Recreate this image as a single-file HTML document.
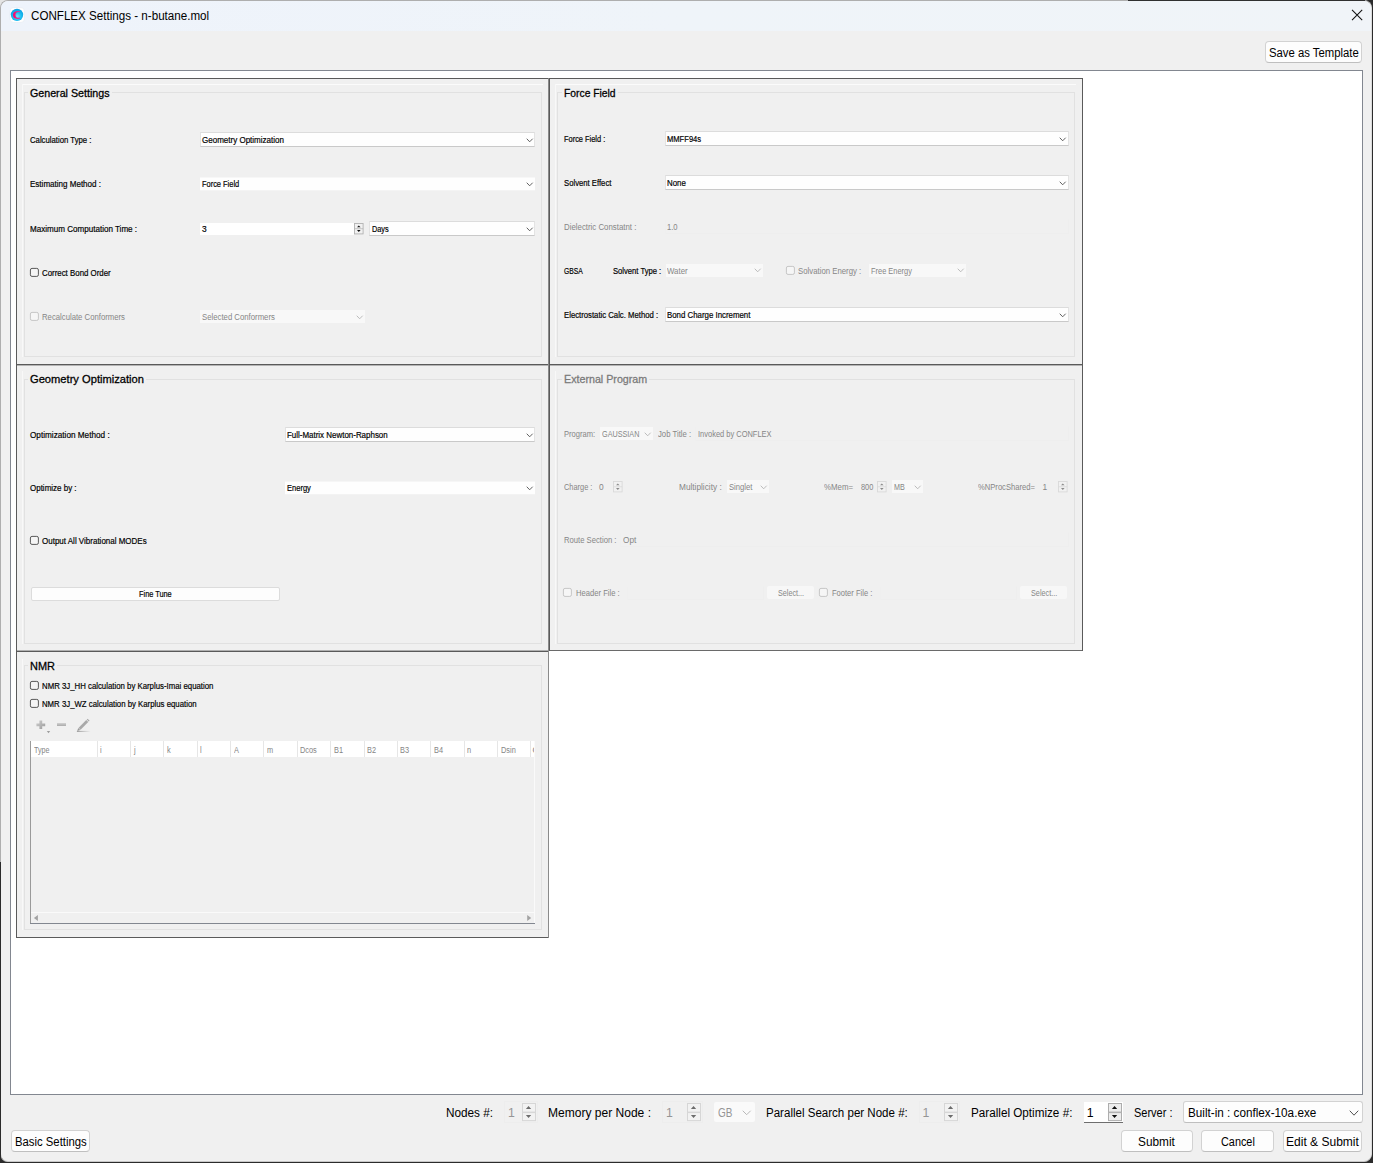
<!DOCTYPE html>
<html><head><meta charset="utf-8"><title>CONFLEX Settings - n-butane.mol</title>
<style>
html,body{margin:0;padding:0}
body{width:1373px;height:1163px;position:relative;overflow:hidden;background:#2b2b2b;font-family:"Liberation Sans",sans-serif}
.a{position:absolute;box-sizing:border-box}
.t{position:absolute;white-space:pre;line-height:16px;height:16px;transform-origin:0 0}
svg{overflow:visible}
</style></head><body>
<div class="a" style="left:0px;top:0px;width:12px;height:12px;background:#e4e4e4;"></div>
<div class="a" style="left:0px;top:0px;width:1372px;height:1162px;background:#f0f0f0;border:1px solid #aeaeae;border-radius:8px;border-right-color:#dcdcdc;border-bottom-color:#c8c8c8;"></div>
<div class="a" style="left:1128px;top:0px;width:237px;height:1px;background:#303030;"></div>
<div class="a" style="left:0px;top:862px;width:1px;height:300px;background:#2b2b2b;"></div>
<div class="a" style="left:1px;top:1px;width:1370px;height:30px;background:linear-gradient(90deg,#eef3fb 0%,#eff4f9 50%,#f0f4f8 100%);border-radius:7px 7px 0 0;"></div>
<svg class="a" style="left:9px;top:7px" width="17" height="17" viewBox="0 0 17 17"><defs><radialGradient id="ig" cx="0.52" cy="0.62" r="0.62"><stop offset="0" stop-color="#74e4fa"/><stop offset="0.5" stop-color="#1cbdf0"/><stop offset="1" stop-color="#089ce2"/></radialGradient><linearGradient id="pg" x1="0" y1="0" x2="1" y2="0"><stop offset="0" stop-color="#ff0068"/><stop offset="0.45" stop-color="#f0207c"/><stop offset="1" stop-color="#b452b8"/></linearGradient></defs><rect x="1.0" y="0.65" width="14.3" height="14.8" rx="3.4" fill="#fefefe" stroke="#e1e6ee" stroke-width="0.5"/><circle cx="8.0" cy="7.85" r="6.2" fill="url(#ig)"/><path d="M11 4.25 C9.5 3.7 4 3.6 4 7.95 C4 12.3 9.5 12.2 11 11.7 L11 10.5 C9.5 11.2 6.45 11 6.45 7.95 C6.45 4.9 9.5 4.7 10.9 5.5 Z" fill="url(#pg)"/></svg>
<span class="t" style="left:31.10px;top:8px;font-size:12.3px;transform:scaleX(0.9445);color:#000;">CONFLEX Settings - n-butane.mol</span>
<svg class="a" style="left:1350px;top:8px" width="14" height="14" viewBox="0 0 14 14"><path d="M2 1.9 L12.2 12.1 M12.2 1.9 L2 12.1" stroke="#111" stroke-width="1.05" fill="none"/></svg>
<div class="a" style="left:1265px;top:41px;width:97px;height:22px;background:#fdfdfd;border:1px solid #d2d2d2;border-radius:4px;border-bottom-color:#bfbfbf;"></div>
<span class="t" style="left:1268.60px;top:45px;font-size:12.3px;transform:scaleX(0.9206);color:#000;">Save as Template</span>
<div class="a" style="left:10px;top:70px;width:1353px;height:1025px;background:#fff;border:1px solid #828790;"></div>
<div class="a" style="left:16px;top:78px;width:1067px;height:572px;background:#f0f0f0;"></div>
<div class="a" style="left:16px;top:650px;width:533px;height:288px;background:#f0f0f0;"></div>
<div class="a" style="left:16px;top:365px;width:1067px;height:1px;background:#b4b4b4;"></div>
<div class="a" style="left:16px;top:650px;width:533px;height:1px;background:#b0b0b0;"></div>
<div class="a" style="left:16px;top:78px;width:1067px;height:1px;background:#5a5a5a;"></div>
<div class="a" style="left:16px;top:364px;width:1067px;height:1px;background:#5a5a5a;"></div>
<div class="a" style="left:16px;top:651px;width:533px;height:1px;background:#5a5a5a;"></div>
<div class="a" style="left:549px;top:650px;width:534px;height:1px;background:#6a6a6a;"></div>
<div class="a" style="left:16px;top:937px;width:533px;height:1px;background:#5a5a5a;"></div>
<div class="a" style="left:16px;top:78px;width:1px;height:860px;background:#5a5a5a;"></div>
<div class="a" style="left:1082px;top:78px;width:1px;height:573px;background:#5a5a5a;"></div>
<div class="a" style="left:548px;top:78px;width:1px;height:860px;background:#8a8a8a;"></div>
<div class="a" style="left:549px;top:78px;width:1px;height:573px;background:#5a5a5a;"></div>
<div class="a" style="left:22px;top:84px;width:521px;height:1px;background:#fbfbfb;"></div>
<div class="a" style="left:22px;top:84px;width:1px;height:273px;background:#f8f8f8;"></div>
<div class="a" style="left:24px;top:92px;width:518px;height:265px;border:1px solid #e1e1e1;"></div>
<div class="a" style="left:28px;top:91px;width:84px;height:3px;background:#f0f0f0;"></div>
<span class="t" style="left:30.30px;top:85px;font-size:11px;transform:scaleX(0.9703);-webkit-text-stroke:0.18px;color:#000;-webkit-text-stroke:0.28px;">General Settings</span>
<span class="t" style="left:30.00px;top:132px;font-size:8.4px;transform:scaleX(0.9248);-webkit-text-stroke:0.18px;color:#000;">Calculation Type :</span>
<div class="a" style="left:200px;top:132px;width:335px;height:15px;background:#fefefe;border:1px solid #e3e3e3;border-top-color:#dcdcdc;border-bottom-color:#c9c9c9;"></div>
<span class="t" style="left:202.10px;top:132px;font-size:8.4px;transform:scaleX(0.9570);-webkit-text-stroke:0.18px;color:#000;">Geometry Optimization</span>
<svg class="a" style="left:525.70px;top:137.60px" width="7.40" height="4.80" viewBox="0 0 7.40 4.80"><path d="M1 1 L3.70 3.80 L6.40 1" fill="none" stroke="#505050" stroke-width="0.9" stroke-linecap="round" stroke-linejoin="round"/></svg>
<span class="t" style="left:30.00px;top:176px;font-size:8.4px;transform:scaleX(0.9591);-webkit-text-stroke:0.18px;color:#000;">Estimating Method :</span>
<div class="a" style="left:200px;top:178px;width:335px;height:12px;background:#fefefe;"></div>
<div class="a" style="left:200px;top:177px;width:335px;height:1px;background:#f7f7f7;"></div>
<div class="a" style="left:200px;top:190px;width:335px;height:1px;background:#f4f4f4;"></div>
<span class="t" style="left:202.10px;top:176px;font-size:8.4px;transform:scaleX(0.8878);-webkit-text-stroke:0.18px;color:#000;">Force Field</span>
<svg class="a" style="left:525.70px;top:182.10px" width="7.40" height="4.80" viewBox="0 0 7.40 4.80"><path d="M1 1 L3.70 3.80 L6.40 1" fill="none" stroke="#505050" stroke-width="0.9" stroke-linecap="round" stroke-linejoin="round"/></svg>
<span class="t" style="left:30.00px;top:221px;font-size:8.4px;transform:scaleX(0.9627);-webkit-text-stroke:0.18px;color:#000;">Maximum Computation Time :</span>
<div class="a" style="left:200px;top:223px;width:154px;height:12px;background:#fff;"></div>
<span class="t" style="left:202.00px;top:221px;font-size:8.4px;-webkit-text-stroke:0.18px;color:#000;">3</span>
<svg class="a" style="left:354.2px;top:223px" width="10" height="12" viewBox="0 0 10 12"><rect x="0.5" y="0.5" width="8.6" height="10.4" fill="#f1f1f1" stroke="#b2b2b2" stroke-width="0.9"/><path d="M0.5 5.7 H9.1" stroke="#b2b2b2" stroke-width="0.7"/><path d="M3 4.2 L4.8 2.5 L6.6 4.2 Z M3 7.1 L4.8 8.9 L6.6 7.1 Z" fill="#111"/></svg>
<div class="a" style="left:369px;top:221px;width:166px;height:15px;background:#fefefe;border:1px solid #e3e3e3;border-top-color:#dcdcdc;border-bottom-color:#c9c9c9;"></div>
<span class="t" style="left:371.60px;top:221px;font-size:8.4px;transform:scaleX(0.8725);-webkit-text-stroke:0.18px;color:#000;">Days</span>
<svg class="a" style="left:525.70px;top:226.80px" width="7.40" height="4.80" viewBox="0 0 7.40 4.80"><path d="M1 1 L3.70 3.80 L6.40 1" fill="none" stroke="#505050" stroke-width="0.9" stroke-linecap="round" stroke-linejoin="round"/></svg>
<svg class="a" style="left:29px;top:267px" width="11" height="11" viewBox="0 0 11 11"><rect x="1.4" y="1.4" width="8" height="8" rx="1.6" fill="#f5f5f5" stroke="#5a5a5a" stroke-width="1"/></svg>
<span class="t" style="left:42.00px;top:265px;font-size:8.4px;transform:scaleX(0.9400);-webkit-text-stroke:0.18px;color:#000;">Correct Bond Order</span>
<svg class="a" style="left:29px;top:311px" width="11" height="11" viewBox="0 0 11 11"><rect x="1.4" y="1.4" width="8" height="8" rx="1.6" fill="#f6f6f6" stroke="#c6c6c6" stroke-width="1"/></svg>
<span class="t" style="left:42.00px;top:309px;font-size:8.4px;transform:scaleX(0.9233);color:#868686;">Recalculate Conformers</span>
<div class="a" style="left:200px;top:310px;width:165px;height:13px;background:#f8f8f8;"></div>
<span class="t" style="left:202.00px;top:309px;font-size:8.4px;transform:scaleX(0.9264);color:#868686;">Selected Conformers</span>
<svg class="a" style="left:355.60px;top:314.80px" width="7.40" height="4.80" viewBox="0 0 7.40 4.80"><path d="M1 1 L3.70 3.80 L6.40 1" fill="none" stroke="#b4b4b4" stroke-width="0.9" stroke-linecap="round" stroke-linejoin="round"/></svg>
<div class="a" style="left:555px;top:84px;width:521px;height:1px;background:#fbfbfb;"></div>
<div class="a" style="left:555px;top:84px;width:1px;height:273px;background:#f8f8f8;"></div>
<div class="a" style="left:557px;top:92px;width:518px;height:265px;border:1px solid #e1e1e1;"></div>
<div class="a" style="left:562px;top:91px;width:56px;height:3px;background:#f0f0f0;"></div>
<span class="t" style="left:563.80px;top:85px;font-size:11px;transform:scaleX(0.9379);-webkit-text-stroke:0.18px;color:#000;-webkit-text-stroke:0.28px;">Force Field</span>
<span class="t" style="left:563.80px;top:131px;font-size:8.4px;transform:scaleX(0.8870);-webkit-text-stroke:0.18px;color:#000;">Force Field :</span>
<div class="a" style="left:665px;top:131px;width:404px;height:15px;background:#fefefe;border:1px solid #e3e3e3;border-top-color:#dcdcdc;border-bottom-color:#c9c9c9;"></div>
<span class="t" style="left:667.40px;top:131px;font-size:8.4px;transform:scaleX(0.9048);-webkit-text-stroke:0.18px;color:#000;">MMFF94s</span>
<svg class="a" style="left:1058.80px;top:136.60px" width="7.40" height="4.80" viewBox="0 0 7.40 4.80"><path d="M1 1 L3.70 3.80 L6.40 1" fill="none" stroke="#505050" stroke-width="0.9" stroke-linecap="round" stroke-linejoin="round"/></svg>
<span class="t" style="left:563.80px;top:175px;font-size:8.4px;transform:scaleX(0.9193);-webkit-text-stroke:0.18px;color:#000;">Solvent Effect</span>
<div class="a" style="left:665px;top:175px;width:404px;height:15px;background:#fefefe;border:1px solid #e3e3e3;border-top-color:#dcdcdc;border-bottom-color:#c9c9c9;"></div>
<span class="t" style="left:667.40px;top:175px;font-size:8.4px;transform:scaleX(0.9413);-webkit-text-stroke:0.18px;color:#000;">None</span>
<svg class="a" style="left:1058.80px;top:180.60px" width="7.40" height="4.80" viewBox="0 0 7.40 4.80"><path d="M1 1 L3.70 3.80 L6.40 1" fill="none" stroke="#505050" stroke-width="0.9" stroke-linecap="round" stroke-linejoin="round"/></svg>
<span class="t" style="left:563.80px;top:219px;font-size:8.4px;transform:scaleX(0.9368);color:#868686;">Dielectric Constatnt :</span>
<div class="a" style="left:665px;top:219px;width:404px;height:15px;border:1px solid #eeeeee;border-top-color:#f0f0f0;border-left-color:#efefef;"></div>
<span class="t" style="left:667.40px;top:219px;font-size:8.4px;transform:scaleX(0.9082);color:#868686;">1.0</span>
<span class="t" style="left:563.80px;top:263px;font-size:8.4px;transform:scaleX(0.8096);-webkit-text-stroke:0.18px;color:#000;">GBSA</span>
<span class="t" style="left:612.90px;top:263px;font-size:8.4px;transform:scaleX(0.9100);-webkit-text-stroke:0.18px;color:#000;">Solvent Type :</span>
<div class="a" style="left:666px;top:264px;width:97px;height:13px;background:#f8f8f8;"></div>
<span class="t" style="left:667.40px;top:263px;font-size:8.4px;transform:scaleX(0.9369);color:#868686;">Water</span>
<svg class="a" style="left:753.80px;top:268.10px" width="7.40" height="4.80" viewBox="0 0 7.40 4.80"><path d="M1 1 L3.70 3.80 L6.40 1" fill="none" stroke="#b4b4b4" stroke-width="0.9" stroke-linecap="round" stroke-linejoin="round"/></svg>
<svg class="a" style="left:785px;top:265px" width="11" height="11" viewBox="0 0 11 11"><rect x="1.4" y="1.4" width="8" height="8" rx="1.6" fill="#f6f6f6" stroke="#c6c6c6" stroke-width="1"/></svg>
<span class="t" style="left:797.80px;top:263px;font-size:8.4px;transform:scaleX(0.9300);color:#868686;">Solvation Energy :</span>
<div class="a" style="left:869px;top:264px;width:97px;height:13px;background:#f8f8f8;"></div>
<span class="t" style="left:870.80px;top:263px;font-size:8.4px;transform:scaleX(0.8871);color:#868686;">Free Energy</span>
<svg class="a" style="left:956.70px;top:268.10px" width="7.40" height="4.80" viewBox="0 0 7.40 4.80"><path d="M1 1 L3.70 3.80 L6.40 1" fill="none" stroke="#b4b4b4" stroke-width="0.9" stroke-linecap="round" stroke-linejoin="round"/></svg>
<span class="t" style="left:563.80px;top:307px;font-size:8.4px;transform:scaleX(0.9234);-webkit-text-stroke:0.18px;color:#000;">Electrostatic Calc. Method :</span>
<div class="a" style="left:665px;top:307px;width:404px;height:15px;background:#fefefe;border:1px solid #e3e3e3;border-top-color:#dcdcdc;border-bottom-color:#c9c9c9;"></div>
<span class="t" style="left:667.40px;top:307px;font-size:8.4px;transform:scaleX(0.9374);-webkit-text-stroke:0.18px;color:#000;">Bond Charge Increment</span>
<svg class="a" style="left:1058.80px;top:312.60px" width="7.40" height="4.80" viewBox="0 0 7.40 4.80"><path d="M1 1 L3.70 3.80 L6.40 1" fill="none" stroke="#505050" stroke-width="0.9" stroke-linecap="round" stroke-linejoin="round"/></svg>
<div class="a" style="left:22px;top:371px;width:1px;height:273px;background:#f8f8f8;"></div>
<div class="a" style="left:24px;top:379px;width:518px;height:265px;border:1px solid #e1e1e1;"></div>
<div class="a" style="left:28px;top:378px;width:118px;height:3px;background:#f0f0f0;"></div>
<span class="t" style="left:30.30px;top:371px;font-size:11px;transform:scaleX(1.0135);-webkit-text-stroke:0.18px;color:#000;-webkit-text-stroke:0.28px;">Geometry Optimization</span>
<span class="t" style="left:30.00px;top:427px;font-size:8.4px;transform:scaleX(0.9779);-webkit-text-stroke:0.18px;color:#000;">Optimization Method :</span>
<div class="a" style="left:285px;top:427px;width:250px;height:15px;background:#fefefe;border:1px solid #e3e3e3;border-top-color:#dcdcdc;border-bottom-color:#c9c9c9;"></div>
<span class="t" style="left:286.90px;top:427px;font-size:8.4px;transform:scaleX(0.9489);-webkit-text-stroke:0.18px;color:#000;">Full-Matrix Newton-Raphson</span>
<svg class="a" style="left:525.50px;top:432.60px" width="7.40" height="4.80" viewBox="0 0 7.40 4.80"><path d="M1 1 L3.70 3.80 L6.40 1" fill="none" stroke="#505050" stroke-width="0.9" stroke-linecap="round" stroke-linejoin="round"/></svg>
<span class="t" style="left:30.00px;top:480px;font-size:8.4px;transform:scaleX(0.9528);-webkit-text-stroke:0.18px;color:#000;">Optimize by :</span>
<div class="a" style="left:285px;top:482px;width:250px;height:12px;background:#fefefe;"></div>
<div class="a" style="left:285px;top:481px;width:250px;height:1px;background:#f6f6f6;"></div>
<div class="a" style="left:285px;top:494px;width:250px;height:1px;background:#f3f3f3;"></div>
<span class="t" style="left:286.90px;top:480px;font-size:8.4px;transform:scaleX(0.8982);-webkit-text-stroke:0.18px;color:#000;">Energy</span>
<svg class="a" style="left:525.50px;top:485.60px" width="7.40" height="4.80" viewBox="0 0 7.40 4.80"><path d="M1 1 L3.70 3.80 L6.40 1" fill="none" stroke="#505050" stroke-width="0.9" stroke-linecap="round" stroke-linejoin="round"/></svg>
<svg class="a" style="left:29px;top:535px" width="11" height="11" viewBox="0 0 11 11"><rect x="1.4" y="1.4" width="8" height="8" rx="1.6" fill="#f5f5f5" stroke="#5a5a5a" stroke-width="1"/></svg>
<span class="t" style="left:42.00px;top:533px;font-size:8.4px;transform:scaleX(0.9543);-webkit-text-stroke:0.18px;color:#000;">Output All Vibrational MODEs</span>
<div class="a" style="left:31px;top:587px;width:249px;height:14px;background:#fdfdfd;border:1px solid #dcdcdc;border-radius:2px;"></div>
<span class="t" style="left:138.90px;top:586px;font-size:8.4px;transform:scaleX(0.8780);-webkit-text-stroke:0.18px;color:#000;">Fine Tune</span>
<div class="a" style="left:555px;top:371px;width:1px;height:273px;background:#f8f8f8;"></div>
<div class="a" style="left:557px;top:379px;width:518px;height:265px;border:1px solid #e1e1e1;"></div>
<div class="a" style="left:562px;top:378px;width:87px;height:3px;background:#f0f0f0;"></div>
<span class="t" style="left:563.80px;top:371px;font-size:11px;transform:scaleX(0.9720);color:#7a7a7a;-webkit-text-stroke:0.28px;">External Program</span>
<span class="t" style="left:563.80px;top:426px;font-size:8.4px;transform:scaleX(0.9031);color:#868686;">Program:</span>
<div class="a" style="left:600px;top:427px;width:53px;height:13px;background:#f8f8f8;"></div>
<span class="t" style="left:601.70px;top:426px;font-size:8.4px;transform:scaleX(0.8639);color:#868686;">GAUSSIAN</span>
<svg class="a" style="left:644.30px;top:431.90px" width="7.40" height="4.80" viewBox="0 0 7.40 4.80"><path d="M1 1 L3.70 3.80 L6.40 1" fill="none" stroke="#b4b4b4" stroke-width="0.9" stroke-linecap="round" stroke-linejoin="round"/></svg>
<span class="t" style="left:658.20px;top:426px;font-size:8.4px;transform:scaleX(0.9234);color:#868686;">Job Title :</span>
<div class="a" style="left:695px;top:426px;width:374px;height:15px;border:1px solid #eeeeee;border-top-color:#f0f0f0;border-left-color:#efefef;"></div>
<span class="t" style="left:697.50px;top:426px;font-size:8.4px;transform:scaleX(0.8930);color:#868686;">Invoked by CONFLEX</span>
<span class="t" style="left:563.80px;top:479px;font-size:8.4px;transform:scaleX(0.8846);color:#868686;">Charge :</span>
<span class="t" style="left:599.00px;top:479px;font-size:8.4px;color:#868686;">0</span>
<svg class="a" style="left:613.2px;top:481px" width="10" height="12" viewBox="0 0 10 12"><rect x="0.5" y="0.5" width="8.6" height="10.4" fill="#f1f1f1" stroke="#d9d9d9" stroke-width="0.9"/><path d="M0.5 5.7 H9.1" stroke="#d9d9d9" stroke-width="0.7"/><path d="M3 4.2 L4.8 2.5 L6.6 4.2 Z M3 7.1 L4.8 8.9 L6.6 7.1 Z" fill="#8a8a8a"/></svg>
<span class="t" style="left:678.60px;top:479px;font-size:8.4px;transform:scaleX(0.9860);color:#868686;">Multiplicity :</span>
<div class="a" style="left:727px;top:480px;width:42px;height:13px;background:#f8f8f8;"></div>
<span class="t" style="left:728.50px;top:479px;font-size:8.4px;transform:scaleX(0.9148);color:#868686;">Singlet</span>
<svg class="a" style="left:759.80px;top:484.60px" width="7.40" height="4.80" viewBox="0 0 7.40 4.80"><path d="M1 1 L3.70 3.80 L6.40 1" fill="none" stroke="#b4b4b4" stroke-width="0.9" stroke-linecap="round" stroke-linejoin="round"/></svg>
<span class="t" style="left:824.20px;top:479px;font-size:8.4px;transform:scaleX(0.9373);color:#868686;">%Mem=</span>
<span class="t" style="left:860.70px;top:479px;font-size:8.4px;transform:scaleX(0.8847);color:#868686;">800</span>
<svg class="a" style="left:877px;top:481px" width="10" height="12" viewBox="0 0 10 12"><rect x="0.5" y="0.5" width="8.6" height="10.4" fill="#f1f1f1" stroke="#d9d9d9" stroke-width="0.9"/><path d="M0.5 5.7 H9.1" stroke="#d9d9d9" stroke-width="0.7"/><path d="M3 4.2 L4.8 2.5 L6.6 4.2 Z M3 7.1 L4.8 8.9 L6.6 7.1 Z" fill="#8a8a8a"/></svg>
<div class="a" style="left:892px;top:480px;width:31px;height:13px;background:#f8f8f8;"></div>
<span class="t" style="left:893.90px;top:479px;font-size:8.4px;transform:scaleX(0.8576);color:#868686;">MB</span>
<svg class="a" style="left:913.70px;top:484.60px" width="7.40" height="4.80" viewBox="0 0 7.40 4.80"><path d="M1 1 L3.70 3.80 L6.40 1" fill="none" stroke="#b4b4b4" stroke-width="0.9" stroke-linecap="round" stroke-linejoin="round"/></svg>
<span class="t" style="left:978.10px;top:479px;font-size:8.4px;transform:scaleX(0.9093);color:#868686;">%NProcShared=</span>
<span class="t" style="left:1042.40px;top:479px;font-size:8.4px;color:#868686;">1</span>
<svg class="a" style="left:1058px;top:481px" width="10" height="12" viewBox="0 0 10 12"><rect x="0.5" y="0.5" width="8.6" height="10.4" fill="#f1f1f1" stroke="#d9d9d9" stroke-width="0.9"/><path d="M0.5 5.7 H9.1" stroke="#d9d9d9" stroke-width="0.7"/><path d="M3 4.2 L4.8 2.5 L6.6 4.2 Z M3 7.1 L4.8 8.9 L6.6 7.1 Z" fill="#8a8a8a"/></svg>
<span class="t" style="left:563.80px;top:532px;font-size:8.4px;transform:scaleX(0.9158);color:#868686;">Route Section :</span>
<div class="a" style="left:620px;top:532px;width:449px;height:15px;border:1px solid #eeeeee;border-top-color:#f0f0f0;border-left-color:#efefef;"></div>
<span class="t" style="left:622.90px;top:532px;font-size:8.4px;transform:scaleX(0.9818);color:#868686;">Opt</span>
<svg class="a" style="left:562px;top:587px" width="11" height="11" viewBox="0 0 11 11"><rect x="1.4" y="1.4" width="8" height="8" rx="1.6" fill="#f6f6f6" stroke="#c6c6c6" stroke-width="1"/></svg>
<span class="t" style="left:575.60px;top:585px;font-size:8.4px;transform:scaleX(0.9107);color:#868686;">Header File :</span>
<div class="a" style="left:627px;top:586px;width:137px;height:14px;border:1px solid #eeeeee;border-top-color:#f0f0f0;border-left-color:#efefef;"></div>
<div class="a" style="left:767px;top:586px;width:47px;height:13px;background:#f7f7f7;border-radius:2px;"></div>
<span class="t" style="left:777.50px;top:585px;font-size:8.4px;transform:scaleX(0.8601);color:#868686;">Select...</span>
<svg class="a" style="left:818px;top:587px" width="11" height="11" viewBox="0 0 11 11"><rect x="1.4" y="1.4" width="8" height="8" rx="1.6" fill="#f6f6f6" stroke="#c6c6c6" stroke-width="1"/></svg>
<span class="t" style="left:831.70px;top:585px;font-size:8.4px;transform:scaleX(0.9015);color:#868686;">Footer File :</span>
<div class="a" style="left:880px;top:586px;width:137px;height:14px;border:1px solid #eeeeee;border-top-color:#f0f0f0;border-left-color:#efefef;"></div>
<div class="a" style="left:1020px;top:586px;width:47px;height:13px;background:#f7f7f7;border-radius:2px;"></div>
<span class="t" style="left:1030.70px;top:585px;font-size:8.4px;transform:scaleX(0.8667);color:#868686;">Select...</span>
<div class="a" style="left:22px;top:659px;width:1px;height:271px;background:#f8f8f8;"></div>
<div class="a" style="left:24px;top:665px;width:518px;height:265px;border:1px solid #e1e1e1;"></div>
<div class="a" style="left:28px;top:664px;width:29px;height:3px;background:#f0f0f0;"></div>
<span class="t" style="left:30.40px;top:658px;font-size:11px;transform:scaleX(0.9941);-webkit-text-stroke:0.18px;color:#000;-webkit-text-stroke:0.28px;">NMR</span>
<svg class="a" style="left:29px;top:680px" width="11" height="11" viewBox="0 0 11 11"><rect x="1.4" y="1.4" width="8" height="8" rx="1.6" fill="#f5f5f5" stroke="#5a5a5a" stroke-width="1"/></svg>
<span class="t" style="left:42.00px;top:678px;font-size:8.4px;transform:scaleX(0.9322);-webkit-text-stroke:0.18px;color:#000;">NMR 3J_HH calculation by Karplus-Imai equation</span>
<svg class="a" style="left:29px;top:698px" width="11" height="11" viewBox="0 0 11 11"><rect x="1.4" y="1.4" width="8" height="8" rx="1.6" fill="#f5f5f5" stroke="#5a5a5a" stroke-width="1"/></svg>
<span class="t" style="left:42.00px;top:696px;font-size:8.4px;transform:scaleX(0.9300);-webkit-text-stroke:0.18px;color:#000;">NMR 3J_WZ calculation by Karplus equation</span>
<svg class="a" style="left:34px;top:716px" width="60" height="20" viewBox="0 0 60 20"><defs><linearGradient id="tg" x1="0" y1="0" x2="1" y2="1"><stop offset="0" stop-color="#cfcfcf"/><stop offset="1" stop-color="#9a9a9a"/></linearGradient><linearGradient id="sg" x1="0" y1="0" x2="1" y2="0"><stop offset="0" stop-color="#8c8c8c"/><stop offset="1" stop-color="#8c8c8c" stop-opacity="0"/></linearGradient></defs><path d="M2.4 7.5 H5.4 V4.4 H8.2 V7.5 H11.2 V10.2 H8.2 V13.1 H5.4 V10.2 H2.4 Z" fill="url(#tg)"/><path d="M12.8 14.9 L16.2 14.9 L14.5 17.2 Z" fill="#9e9e9e"/><rect x="23" y="7.3" width="9" height="2.7" fill="#bdbdbd"/><rect x="23" y="9.4" width="9" height="0.6" fill="#a8a8a8"/><path d="M44.61 11.71 L52.25 4.07 L54.23 6.05 L46.59 13.69 Z" fill="#a9a9a9"/><path d="M44.26 12.06 L46.24 14.04 L43.2 15.1 Z" fill="#9a9a9a"/><path d="M52.74 3.58 L53.66 2.66 L55.64 4.64 L54.72 5.56 Z" fill="#a9a9a9"/><rect x="42.9" y="14.9" width="13.8" height="0.9" fill="url(#sg)"/></svg>
<div class="a" style="left:30px;top:741px;width:1px;height:183px;background:#9a9a9a;"></div>
<div class="a" style="left:31px;top:741px;width:503px;height:16px;background:#fff;"></div>
<div class="a" style="left:534px;top:741px;width:1px;height:183px;background:#fafafa;"></div>
<div class="a" style="left:31px;top:912px;width:503px;height:1px;background:#fafafa;"></div>
<div class="a" style="left:30px;top:923px;width:505px;height:1px;background:#828790;"></div>
<span class="t" style="left:33.90px;top:742px;font-size:8.4px;transform:scaleX(0.8508);color:#858585;">Type</span>
<div class="a" style="left:97px;top:741px;width:1px;height:16px;background:#e6e6e6;"></div>
<span class="t" style="left:100.30px;top:742px;font-size:8.4px;transform:scaleX(0.8800);color:#858585;">i</span>
<div class="a" style="left:130px;top:741px;width:1px;height:16px;background:#e6e6e6;"></div>
<span class="t" style="left:133.84px;top:742px;font-size:8.4px;transform:scaleX(0.8800);color:#858585;">j</span>
<div class="a" style="left:163px;top:741px;width:1px;height:16px;background:#e6e6e6;"></div>
<span class="t" style="left:167.00px;top:742px;font-size:8.4px;transform:scaleX(0.8800);color:#858585;">k</span>
<div class="a" style="left:197px;top:741px;width:1px;height:16px;background:#e6e6e6;"></div>
<span class="t" style="left:200.35px;top:742px;font-size:8.4px;transform:scaleX(0.8800);color:#858585;">l</span>
<div class="a" style="left:230px;top:741px;width:1px;height:16px;background:#e6e6e6;"></div>
<span class="t" style="left:233.70px;top:742px;font-size:8.4px;transform:scaleX(0.8800);color:#858585;">A</span>
<div class="a" style="left:263px;top:741px;width:1px;height:16px;background:#e6e6e6;"></div>
<span class="t" style="left:267.05px;top:742px;font-size:8.4px;transform:scaleX(0.8800);color:#858585;">m</span>
<div class="a" style="left:297px;top:741px;width:1px;height:16px;background:#e6e6e6;"></div>
<span class="t" style="left:300.40px;top:742px;font-size:8.4px;transform:scaleX(0.8800);color:#858585;">Dcos</span>
<div class="a" style="left:330px;top:741px;width:1px;height:16px;background:#e6e6e6;"></div>
<span class="t" style="left:333.75px;top:742px;font-size:8.4px;transform:scaleX(0.8800);color:#858585;">B1</span>
<div class="a" style="left:364px;top:741px;width:1px;height:16px;background:#e6e6e6;"></div>
<span class="t" style="left:367.10px;top:742px;font-size:8.4px;transform:scaleX(0.8800);color:#858585;">B2</span>
<div class="a" style="left:397px;top:741px;width:1px;height:16px;background:#e6e6e6;"></div>
<span class="t" style="left:400.45px;top:742px;font-size:8.4px;transform:scaleX(0.8800);color:#858585;">B3</span>
<div class="a" style="left:430px;top:741px;width:1px;height:16px;background:#e6e6e6;"></div>
<span class="t" style="left:433.80px;top:742px;font-size:8.4px;transform:scaleX(0.8800);color:#858585;">B4</span>
<div class="a" style="left:464px;top:741px;width:1px;height:16px;background:#e6e6e6;"></div>
<span class="t" style="left:467.15px;top:742px;font-size:8.4px;transform:scaleX(0.8800);color:#858585;">n</span>
<div class="a" style="left:497px;top:741px;width:1px;height:16px;background:#e6e6e6;"></div>
<span class="t" style="left:500.50px;top:742px;font-size:8.4px;transform:scaleX(0.8800);color:#858585;">Dsin</span>
<div class="a" style="left:530px;top:741px;width:1px;height:16px;background:#e6e6e6;"></div>
<span class="t" style="left:532.4px;top:742px;font-size:8.4px;color:#7d7d7d;width:1.7px;overflow:hidden">C</span>
<svg class="a" style="left:32px;top:913px" width="504" height="10" viewBox="0 0 504 10"><path d="M5.9 2 L5.9 7.9 L1.9 4.95 Z M495.2 2 L495.2 7.9 L499.2 4.95 Z" fill="#a3a3a3"/></svg>
<span class="t" style="left:446.30px;top:1105px;font-size:12.3px;transform:scaleX(0.9566);color:#000;">Nodes #:</span>
<div class="a" style="left:504px;top:1101px;width:34px;height:22px;border:1px solid #ededed;"></div>
<span class="t" style="left:508.10px;top:1105px;font-size:12.3px;color:#959595;">1</span>
<svg class="a" style="left:522px;top:1103px" width="15" height="19" viewBox="0 0 15 19"><rect x="0.5" y="0.5" width="13" height="8.6" fill="#f2f2f2" stroke="#d6d6d6" stroke-width="1"/><rect x="0.5" y="9.6" width="13" height="8" fill="#f2f2f2" stroke="#d6d6d6" stroke-width="1"/><path d="M3.9 6.0 L6.55 2.9 L9.2 6.0 Z M3.9 11.9 L6.55 14.9 L9.2 11.9 Z" fill="#6c6c6c"/></svg>
<span class="t" style="left:548.40px;top:1105px;font-size:12.3px;transform:scaleX(0.9785);color:#000;">Memory per Node :</span>
<div class="a" style="left:662px;top:1101px;width:41px;height:22px;border:1px solid #ededed;"></div>
<span class="t" style="left:665.90px;top:1105px;font-size:12.3px;color:#959595;">1</span>
<svg class="a" style="left:687px;top:1103px" width="15" height="19" viewBox="0 0 15 19"><rect x="0.5" y="0.5" width="13" height="8.6" fill="#f2f2f2" stroke="#d6d6d6" stroke-width="1"/><rect x="0.5" y="9.6" width="13" height="8" fill="#f2f2f2" stroke="#d6d6d6" stroke-width="1"/><path d="M3.9 6.0 L6.55 2.9 L9.2 6.0 Z M3.9 11.9 L6.55 14.9 L9.2 11.9 Z" fill="#6c6c6c"/></svg>
<div class="a" style="left:714px;top:1102px;width:41px;height:20px;background:#fafafa;border-radius:2px;"></div>
<span class="t" style="left:718.20px;top:1105px;font-size:12.3px;transform:scaleX(0.8106);color:#959595;">GB</span>
<svg class="a" style="left:742.20px;top:1109.95px" width="9.40" height="5.70" viewBox="0 0 9.40 5.70"><path d="M1 1 L4.70 4.70 L8.40 1" fill="none" stroke="#b8b8b8" stroke-width="1" stroke-linecap="round" stroke-linejoin="round"/></svg>
<span class="t" style="left:766.40px;top:1105px;font-size:12.3px;transform:scaleX(0.9385);color:#000;">Parallel Search per Node #:</span>
<div class="a" style="left:919px;top:1101px;width:41px;height:22px;border:1px solid #ededed;"></div>
<span class="t" style="left:922.60px;top:1105px;font-size:12.3px;color:#959595;">1</span>
<svg class="a" style="left:944px;top:1103px" width="15" height="19" viewBox="0 0 15 19"><rect x="0.5" y="0.5" width="13" height="8.6" fill="#f2f2f2" stroke="#d6d6d6" stroke-width="1"/><rect x="0.5" y="9.6" width="13" height="8" fill="#f2f2f2" stroke="#d6d6d6" stroke-width="1"/><path d="M3.9 6.0 L6.55 2.9 L9.2 6.0 Z M3.9 11.9 L6.55 14.9 L9.2 11.9 Z" fill="#6c6c6c"/></svg>
<span class="t" style="left:970.50px;top:1105px;font-size:12.3px;transform:scaleX(0.9509);color:#000;">Parallel Optimize #:</span>
<div class="a" style="left:1084px;top:1102px;width:39px;height:21px;background:#fff;border-bottom:1px solid #6e6e6e;"></div>
<span class="t" style="left:1086.80px;top:1105px;font-size:12.3px;color:#000;">1</span>
<svg class="a" style="left:1108px;top:1103px" width="15" height="19" viewBox="0 0 15 19"><rect x="0.5" y="0.5" width="13" height="8.6" fill="#ededed" stroke="#adadad" stroke-width="1"/><rect x="0.5" y="9.6" width="13" height="8" fill="#ededed" stroke="#adadad" stroke-width="1"/><path d="M3.9 6.0 L6.55 2.9 L9.2 6.0 Z M3.9 11.9 L6.55 14.9 L9.2 11.9 Z" fill="#111"/></svg>
<span class="t" style="left:1134.10px;top:1105px;font-size:12.3px;transform:scaleX(0.8940);color:#000;">Server :</span>
<div class="a" style="left:1183px;top:1101px;width:180px;height:22px;background:#fdfdfd;border:1px solid #d2d2d2;border-radius:3px;border-bottom-color:#bfbfbf;"></div>
<span class="t" style="left:1188.40px;top:1105px;font-size:12.3px;transform:scaleX(0.9526);color:#000;">Built-in : conflex-10a.exe</span>
<svg class="a" style="left:1349.00px;top:1110.10px" width="10.00" height="6.20" viewBox="0 0 10.00 6.20"><path d="M1 1 L5.00 5.20 L9.00 1" fill="none" stroke="#505050" stroke-width="1.0" stroke-linecap="round" stroke-linejoin="round"/></svg>
<div class="a" style="left:11px;top:1130px;width:79px;height:22px;background:#fdfdfd;border:1px solid #d2d2d2;border-radius:4px;border-bottom-color:#bfbfbf;"></div>
<span class="t" style="left:14.50px;top:1134px;font-size:12.3px;transform:scaleX(0.9200);color:#000;">Basic Settings</span>
<div class="a" style="left:1121px;top:1130px;width:72px;height:22px;background:#fdfdfd;border:1px solid #d2d2d2;border-radius:4px;border-bottom-color:#bfbfbf;"></div>
<span class="t" style="left:1138.10px;top:1134px;font-size:12.3px;transform:scaleX(0.9613);color:#000;">Submit</span>
<div class="a" style="left:1201px;top:1130px;width:73px;height:22px;background:#fdfdfd;border:1px solid #d2d2d2;border-radius:4px;border-bottom-color:#bfbfbf;"></div>
<span class="t" style="left:1220.50px;top:1134px;font-size:12.3px;transform:scaleX(0.8829);color:#000;">Cancel</span>
<div class="a" style="left:1283px;top:1130px;width:79px;height:22px;background:#fdfdfd;border:1px solid #d2d2d2;border-radius:4px;border-bottom-color:#bfbfbf;"></div>
<span class="t" style="left:1285.70px;top:1134px;font-size:12.3px;transform:scaleX(0.9783);color:#000;">Edit &amp; Submit</span>
</body></html>
